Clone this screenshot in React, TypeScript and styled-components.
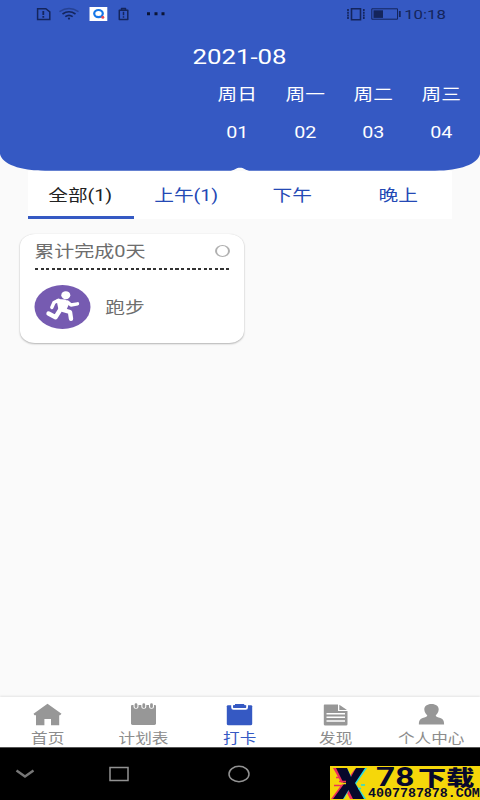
import React from 'react';
import styled, { createGlobalStyle } from 'styled-components';

const BLUE = '#3559c3';

const Global = createGlobalStyle`
  * { box-sizing: border-box; }
  body { margin: 0; background: #fafafa; }
`;

const Screen = styled.div`
  width: 480px;
  height: 800px;
  display: flex;
  flex-direction: column;
  overflow: hidden;
  background: #fafafa;
  font-family: Roboto, "Noto Sans CJK SC", sans-serif;
`;

/* Wide lettering: glyphs are stretched horizontally around the chosen origin. */
const Label = styled.span<{ $size: number; $color: string; $stretch?: number; $origin?: string; $drop?: number }>`
  display: inline-block;
  flex: none;
  white-space: nowrap;
  line-height: 1;
  font-size: ${p => p.$size}px;
  color: ${p => p.$color};
  transform: translate(-0.8px, ${p => p.$drop ?? 1}px) scaleX(${p => p.$stretch ?? 1.23});
  transform-origin: ${p => p.$origin ?? 'center'};
`;

const Header = styled.header`
  position: relative;
  flex: none;
  height: 171px;
  display: flex;
  flex-direction: column;
  align-items: center;
  z-index: 1;
`;

const HeaderShape = styled.svg`
  position: absolute;
  inset: 0;
  z-index: -1;
`;

const StatusBar = styled.div`
  width: 100%;
  height: 28px;
  display: flex;
  align-items: center;
  justify-content: space-between;
  padding-right: 33px;
`;

const StatusRight = styled.div`
  display: flex;
  align-items: center;
  gap: 12px;
`;

const Month = styled.div`
  height: 57px;
  display: flex;
  align-items: center;
`;

const Week = styled.div`
  align-self: flex-end;
  margin-right: 4px;
  display: grid;
  grid-template-columns: repeat(4, 68px);
`;

const Day = styled.div`
  display: flex;
  flex-direction: column;
  align-items: center;
  gap: 22px;
  padding-top: 1px;
`;

const Tabs = styled.nav`
  flex: none;
  display: grid;
  grid-template-columns: repeat(4, 106px);
  width: 424px;
  height: 48px;
  margin: 0 28px;
  background: #fff;
`;

const Tab = styled.button<{ $active?: boolean }>`
  border: 0;
  padding: 2px 0 0;
  background: none;
  font-family: inherit;
  display: flex;
  align-items: center;
  justify-content: center;
  border-bottom: 3px solid ${p => (p.$active ? BLUE : 'transparent')};
`;

const Content = styled.main`
  flex: 1;
  padding: 15px 20px;
`;

const Card = styled.article`
  width: 224px;
  height: 109px;
  padding: 0 14px 0 15px;
  background: #fff;
  border-radius: 15px / 12px;
  box-shadow: 0 1px 2px rgba(0, 0, 0, 0.28), 0 0 1px rgba(0, 0, 0, 0.12);
`;

const CardHead = styled.div`
  height: 34px;
  display: flex;
  align-items: center;
  justify-content: space-between;
`;

const Ring = styled.i`
  width: 15px;
  height: 12px;
  border: 1.8px solid #b0b0b0;
  border-width: 1px 2px;
  border-radius: 50%;
`;

const Dashes = styled.div`
  width: 194px;
  height: 1.5px;
  background: repeating-linear-gradient(90deg, #333 0 3.2px, transparent 3.2px 5.62px);
`;

const Task = styled.div`
  display: flex;
  align-items: center;
  gap: 15px;
  padding-top: 15px;
`;

const BottomNav = styled.nav`
  flex: none;
  height: 50px;
  display: grid;
  grid-template-columns: repeat(5, 96px);
  background: #fff;
  box-shadow: 0 -1px 2px rgba(0, 0, 0, 0.09);
`;

const NavItem = styled.div`
  display: flex;
  flex-direction: column;
  align-items: center;
  padding-top: 4px;
  gap: 5px;
`;

const SystemBar = styled.footer`
  flex: none;
  height: 53px;
  display: flex;
  align-items: flex-end;
  justify-content: space-between;
  background: #000;
  border-top: 1px solid #555;
`;

const SystemKeys = styled.div`
  align-self: flex-start;
  display: grid;
  grid-template-columns: 50px 138px 102px;
  justify-items: center;
  align-items: center;
  height: 52px;
`;

const Brand = styled.div`
  width: 150px;
  height: 34px;
  display: flex;
  background: #f5d70a;
`;

const BrandText = styled.div`
  display: flex;
  flex-direction: column;
  width: 112px;
`;

const BrandName = styled.div`
  height: 21px;
  padding-left: 8px;
  display: flex;
  align-items: center;
`;

const BrandDigits = styled.span`
  font: 700 25px/21px Roboto, sans-serif;
  color: #07082b;
  width: 42px;
  transform: translateY(1px) scaleX(1.34);
  transform-origin: left;
`;

const BrandHan = styled.span`
  font: 900 21px/21px "Noto Sans CJK SC", sans-serif;
  color: #07082b;
  white-space: nowrap;
  transform: scaleX(1.34);
  transform-origin: left;
`;

const BrandSite = styled.span`
  font: 700 13.3px/13px "Liberation Mono", monospace;
  color: #07082b;
  white-space: nowrap;
`;

const INK = '#14255c';

const LeftStatusIcons = () => (
  <svg width="180" height="28" fill="none" stroke={INK} strokeWidth="1.5">
    <path d="M37.6 8.7h8.2l4 3.2v7.6H37.6z" />
    <path d="M43.3 11v4M43.3 16v1.7" strokeWidth="1.8" />
    <path d="M59.5 11.6Q69 5.6 78.5 11.6" opacity=".45" />
    <path d="M62.5 14Q69 9.5 75.5 14M65.3 16.7Q69 14 72.7 16.7" strokeWidth="1.6" />
    <circle cx="69" cy="18.6" r="1.1" fill={INK} stroke="none" />
    <path d="M89.500 7H107.300V21H89.500z" fill="#fff" stroke="none" />
    <ellipse cx="98.500" cy="13.600" rx="4.300" ry="3.600" stroke="#1677e8" strokeWidth="2.200" />
    <circle cx="102.800" cy="17.300" r="1.500" fill="#e64a55" stroke="none" />
    <path d="M121.500 9.700v-1.200h4v1.200M119.300 10.200h8.500v9.300h-8.500z" strokeLinejoin="round" />
    <path d="M123.500 11.700v3.500M123.500 16.200v1.500" />
    <path d="M147 12.200h3v3h-3zM154.500 12.200h3v3h-3zM161.500 12.200h3v3h-3z" fill="#0b1536" stroke="none" />
  </svg>
);

const RightStatusIcons = () => (
  <svg width="55" height="28" fill="none" stroke={INK}>
    <path d="M5.500 8.700h9v11.100h-9z" strokeWidth="1.600" />
    <path d="M2 9v10M17.800 9v10" strokeWidth="1.700" strokeDasharray="2 .7" />
    <path d="M25.800 8.800h25.700v10.400H25.800z" strokeWidth="1" />
    <path d="M27.500 10.300h9.500v7.600h-9.500z" fill={INK} stroke="none" />
    <path d="M53.800 11v6" strokeWidth="1.800" />
  </svg>
);

const RunnerIcon = () => (
  <svg width="56" height="44" viewBox="0.5 0 56 44" overflow="visible" fill="none" stroke="#fff" strokeLinecap="round" strokeLinejoin="round">
    <ellipse cx="28" cy="22" rx="28" ry="22" fill="#765bb1" stroke="none" />
    <ellipse cx="31.300" cy="10.200" rx="4.500" ry="4" fill="#fff" stroke="none" />
    <path d="M23 15L30.500 15.500L34 17.500L30.500 25.500L25 24.500z" fill="#fff" strokeWidth="2" />
    <path d="M24 15.300L19.500 17.500L17.300 22.500M33 17L36.500 20L43 18.800" strokeWidth="3.400" />
    <path d="M26.200 24L21 32.200L14 28.500M28.500 25L35.500 27L36.500 33.800" strokeWidth="4.400" />
  </svg>
);

type NavName = 'home' | 'plan' | 'check' | 'find' | 'user';

const NavIcon = ({ name }: { name: NavName }) => (
  <svg width="30" height="25" viewBox="0.5 0 30 25" fill={name === 'check' ? BLUE : '#979797'}>
    {name === 'home' && (
      <path d="M15 2.700L29 12.800L27.500 14.200H26.700V24.300H18.500V18H11.900V24.300H3.500V14.200H2L1 12.800z" />
    )}
    {name === 'plan' && (
      <>
        <path d="M3.600 4H26.500Q27.500 4 27.500 5V22.600Q27.500 24 26 24H4Q2.500 24 2.500 22.600V5Q2.500 4 3.600 4z" />
        <path d="M7.500 3v2.200M15.300 3v2.200M23 3v2.200" stroke="#fff" strokeWidth="5" strokeLinecap="round" />
        <path d="M7.500 3.700v2M15.300 3.700v2M23 3.700v2" stroke="#979797" strokeWidth="2.800" strokeLinecap="round" />
      </>
    )}
    {name === 'check' && (
      <>
        <path d="M3.500 4.300H26.500Q27.700 4.300 27.700 5.300V23Q27.700 24.200 26 24.200H4Q2.300 24.200 2.300 23V5.300Q2.300 4.300 3.500 4.300z" />
        <path d="M7.600 3v3.200Q7.600 7.800 9 7.800H21.200Q22.600 7.800 22.600 6.200V3" fill="none" stroke="#fff" strokeWidth="1.800" />
        <path d="M9.200 4.200H10.500V3H19.700V4.200H21V6H9.200z" />
      </>
    )}
    {name === 'find' && (
      <>
        <path d="M4 3.500H17.500V10H27V23.300Q27 24.500 25.500 24.500H4.700Q3.300 24.500 3.300 23.300V4.500Q3.300 3.500 4 3.500zM18.800 3.700L26.500 9H18.800z" />
        <path d="M6 12.700h18.500M6 16.300h18.500M6 20h18.500" stroke="#fff" strokeWidth="1.500" />
      </>
    )}
    {name === 'user' && (
      <path d="M15 3C10.500 3 7.800 5.300 7.800 8.500C7.800 11.500 10 13.600 10.800 14.400C10.800 15.800 8.500 16.100 6.200 16.900C3 18 2.400 20 2.400 23.500H27.600C27.600 20 27 18 23.800 16.900C21.500 16.100 19.200 15.800 19.200 14.400C20 13.600 22.200 11.500 22.200 8.500C22.200 5.300 19.500 3 15 3z" />
    )}
  </svg>
);

const BrandMark = () => (
  <svg width="38" height="34" fill="none">
    <path d="M3 2H15L19 11L25 3H32L22 18L32 33H20L16 25L11 33H1L12 18z" fill="#ee2f5c" />
    <path d="M8 2H17L22 12L28 2H37L26 18L36 33H25L19 24L14 33H5L16 18z" fill="#25dce1" />
    <path d="M6 2H17L21 11L26 2H35L25 17L34 33H23L18.500 24L13 33H3L14 18z" fill="#07082b" />
    <path d="M6 11.500h4M4 19.500h7M9 15.500h7" stroke="#ee2f5c" strokeWidth="1.300" />
    <path d="M9 17.500h7M28 20.500h5" stroke="#f5d70a" strokeWidth="1.300" />
    <path d="M28 22.500h3M31 19h4" stroke="#25dce1" strokeWidth="1.300" />
  </svg>
);

const days = [['周日', '01'], ['周一', '02'], ['周二', '03'], ['周三', '04']];
const tabs = ['全部(1)', '上午(1)', '下午', '晚上'];
const navItems: { name: NavName; label: string }[] = [
  { name: 'home', label: '首页' },
  { name: 'plan', label: '计划表' },
  { name: 'check', label: '打卡' },
  { name: 'find', label: '发现' },
  { name: 'user', label: '个人中心' },
];

export default function App() {
  return (
    <Screen>
      <Global />
      <Header>
        <HeaderShape width="480" height="171" fill={BLUE}>
          <path d="M0 0H480V154C478 164 460 170.700 435 170.700H249C245 170 244 167.800 240 167.800C236 167.800 235 170 231 170.700H45C20 170.700 2 164 0 154z" />
        </HeaderShape>
        <StatusBar>
          <LeftStatusIcons />
          <StatusRight>
            <RightStatusIcons />
            <Label $size={13.5} $color={INK} $origin="right" $stretch={1.24}>10:18</Label>
          </StatusRight>
        </StatusBar>
        <Month><Label $size={21} $color="#fff" $drop={0.5}>2021-08</Label></Month>
        <Week>
          {days.map(([name, date]) => (
            <Day key={date}>
              <Label $size={16} $color="#fff">{name}</Label>
              <Label $size={16} $color="#fff">{date}</Label>
            </Day>
          ))}
        </Week>
      </Header>
      <Tabs>
        {tabs.map((tab, i) => (
          <Tab key={tab} $active={i === 0}>
            <Label $size={16} $color={i === 0 ? '#222' : '#2449b5'}>{tab}</Label>
          </Tab>
        ))}
      </Tabs>
      <Content>
        <Card>
          <CardHead>
            <Label $size={16} $color="#6d6d6d" $origin="left" $drop={0.5} $stretch={1.25}>累计完成0天</Label>
            <Ring />
          </CardHead>
          <Dashes />
          <Task>
            <RunnerIcon />
            <Label $size={16} $color="#6d6d6d" $origin="left">跑步</Label>
          </Task>
        </Card>
      </Content>
      <BottomNav>
        {navItems.map(({ name, label }) => (
          <NavItem key={name}>
            <NavIcon name={name} />
            <Label $size={13.5} $color={name === 'check' ? BLUE : '#8c8c8c'}>{label}</Label>
          </NavItem>
        ))}
      </BottomNav>
      <SystemBar>
        <SystemKeys>
          <svg width="20" height="12" fill="none" stroke="#777" strokeWidth="2.400">
            <path d="M1.500 2.500L10 8.500L18.500 2.500" />
          </svg>
          <svg width="20" height="16" fill="none" stroke="#929292" strokeWidth="1.500">
            <path d="M1 1.500H19V14.500H1z" />
          </svg>
          <svg width="22" height="18" fill="none" stroke="#929292" strokeWidth="1.500">
            <ellipse cx="11" cy="9" rx="10" ry="7.700" />
          </svg>
        </SystemKeys>
        <Brand>
          <BrandMark />
          <BrandText>
            <BrandName>
              <BrandDigits>78</BrandDigits>
              <BrandHan>下载</BrandHan>
            </BrandName>
            <BrandSite>4007787878.COM</BrandSite>
          </BrandText>
        </Brand>
      </SystemBar>
    </Screen>
  );
}
